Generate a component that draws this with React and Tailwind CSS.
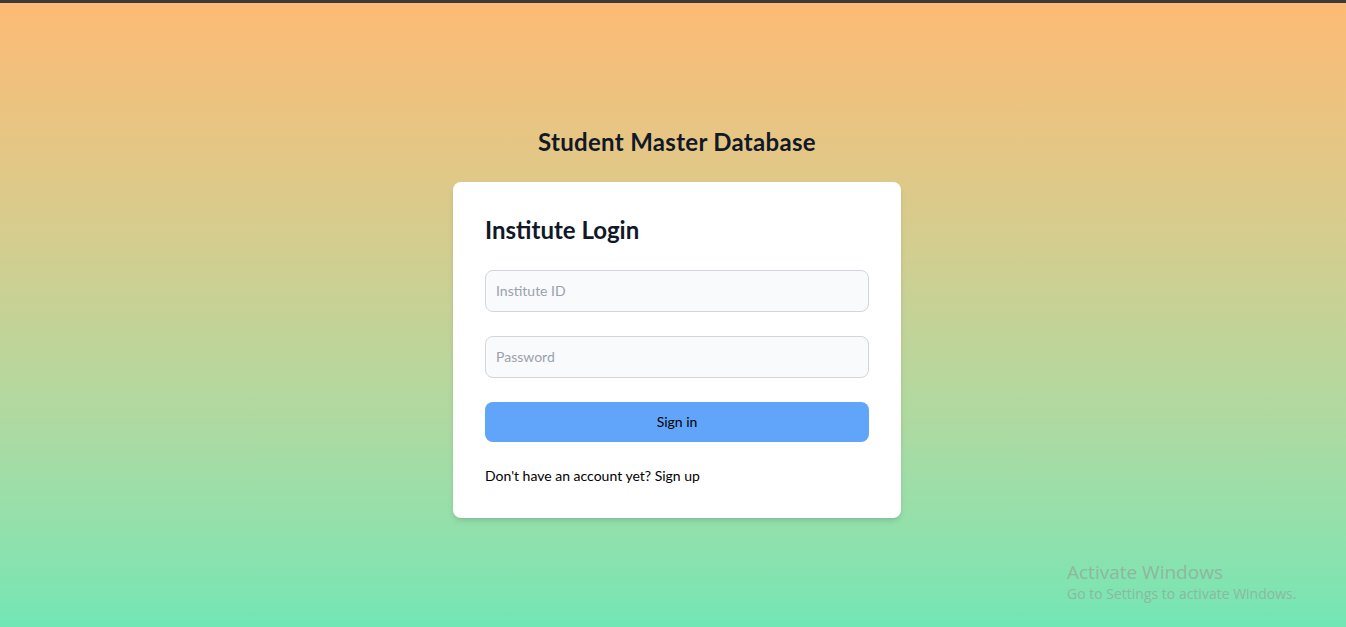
export default function App() {
  return (
    <div
      className="relative min-h-screen flex flex-col bg-gradient-to-b from-[#fdba74] to-[#72e6b5]"
      style={{ fontFamily: "Lato, 'Noto Sans', sans-serif" }}
    >
      <div className="h-[3px] bg-[#3a3a3a]" />
      <div className="flex flex-col items-center pt-[123px] pl-2">
        <h1 className="text-2xl font-bold tracking-[0.3px] text-[#111827] mb-6">Student Master Database</h1>
        <div className="w-[448px] bg-white rounded-lg shadow-md p-8">
          <h2 className="text-2xl font-bold text-[#111827] mb-6">Institute Login</h2>
          <form className="flex flex-col gap-6" onSubmit={(e) => e.preventDefault()}>
            <input
              type="text"
              placeholder="Institute ID"
              className="w-full bg-gray-50 border border-gray-300 rounded-lg px-2.5 py-2.5 text-sm text-gray-900 placeholder:text-gray-400 outline-none"
            />
            <input
              type="password"
              placeholder="Password"
              className="w-full bg-gray-50 border border-gray-300 rounded-lg px-2.5 py-2.5 text-sm text-gray-900 placeholder:text-gray-400 outline-none"
            />
            <button
              type="submit"
              className="w-full bg-[#60a5fa] rounded-lg py-2.5 text-sm text-black"
            >
              Sign in
            </button>
            <p className="text-sm text-black">
              Don't have an account yet? <a href="#">Sign up</a>
            </p>
          </form>
        </div>
      </div>
      <div
        className="absolute left-[1067px] top-[561px] text-[#8fb79c] leading-tight"
        style={{ fontFamily: "'Open Sans', 'Noto Sans', sans-serif" }}
      >
        <div className="text-[19px]">Activate Windows</div>
        <div className="text-[14px]">Go to Settings to activate Windows.</div>
      </div>
    </div>
  );
}
